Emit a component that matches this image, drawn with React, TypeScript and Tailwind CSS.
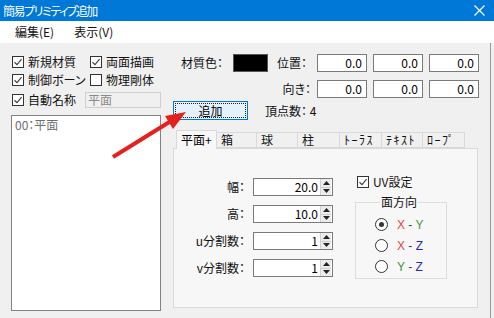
import React from 'react';

const jp = "font-['Noto_Sans_CJK_JP','Liberation_Sans',sans-serif] [font-feature-settings:'palt']";

function Check({ on, label }: { on: boolean; label: string }) {
  return (
    <div className="flex items-center h-[18px]">
      <span className="w-[12px] h-[12px] border border-[#333] bg-white flex items-center justify-center">
        {on && (
          <svg width="10" height="10" viewBox="0 0 10 10">
            <path d="M1.5 5.2 L4 7.6 L8.6 2.2" fill="none" stroke="#444" strokeWidth="1.2" />
          </svg>
        )}
      </span>
      <span className="ml-[4px] text-[12px] leading-none text-[#111]">{label}</span>
    </div>
  );
}

function NumBox({ value }: { value: string }) {
  return (
    <div className="w-[50px] h-[18px] border border-[#7a7a7a] bg-white flex items-center justify-end pr-[4px] text-[12px] leading-none text-black">
      {value}
    </div>
  );
}

function Spin({ value }: { value: string }) {
  return (
    <div className="w-[80px] h-[18px] border border-[#7a7a7a] bg-white flex items-center">
      <span className="flex-1 text-right pr-[2px] text-[12px] leading-none text-black">{value}</span>
      <span className="w-[11px] h-[16px] mr-[1px] flex flex-col border-l border-[#d0d0d0] bg-[#ececec]">
        <span className="flex-1 flex items-center justify-center border-b border-[#cfcfcf]">
          <svg width="7" height="4" viewBox="0 0 7 4"><path d="M0 4 L3.5 0 L7 4 Z" fill="#222" /></svg>
        </span>
        <span className="flex-1 flex items-center justify-center">
          <svg width="7" height="4" viewBox="0 0 7 4"><path d="M0 0 L3.5 4 L7 0 Z" fill="#222" /></svg>
        </span>
      </span>
    </div>
  );
}

function Radio({ on, a, b, ca, cb }: { on: boolean; a: string; b: string; ca: string; cb: string }) {
  return (
    <div className="flex items-center h-[21px]">
      <span className="w-[13px] h-[13px] rounded-full border border-[#333] bg-white flex items-center justify-center">
        {on && <span className="w-[5px] h-[5px] rounded-full bg-[#333]" />}
      </span>
      <span className="ml-[9px] text-[12px] leading-none font-['Liberation_Sans',sans-serif]">
        <span className={ca}>{a}</span>
        <span className="text-[#444]"> - </span>
        <span className={cb}>{b}</span>
      </span>
    </div>
  );
}

export default function App() {
  const tabs = [
    { label: '平面+', w: 'w-[41px]' },
    { label: '箱', w: 'w-[40px]' },
    { label: '球', w: 'w-[41px]' },
    { label: '柱', w: 'w-[42px]' },
    { label: 'ﾄｰﾗｽ', w: 'w-[42px]' },
    { label: 'ﾃｷｽﾄ', w: 'w-[41px]' },
    { label: 'ﾛｰﾌﾟ', w: 'w-[42px]' },
  ];
  const rows = [
    { label: '幅：', value: '20.0' },
    { label: '高：', value: '10.0' },
    { label: 'u分割数：', value: '1' },
    { label: 'v分割数：', value: '1' },
  ];

  return (
    <div className={`relative w-[494px] h-[318px] bg-[#f0f0f0] flex flex-col overflow-hidden ${jp}`}>
      {/* Title bar */}
      <div className="h-[21px] bg-[#0078d7] flex items-center justify-between pl-[3px] pr-[9px]">
        <span className="text-white text-[12px] leading-none tracking-[-1.5px]">簡易プリミティブ追加</span>
        <svg width="11" height="11" viewBox="0 0 11 11">
          <path d="M0.5 0.5 L10.5 10.5 M10.5 0.5 L0.5 10.5" stroke="#fff" strokeWidth="1.2" />
        </svg>
      </div>

      {/* Menu */}
      <div className="h-[22px] bg-white flex items-center gap-[20px] pl-[15px] text-[12px] leading-none text-[#111]">
        <span>編集(E)</span>
        <span>表示(V)</span>
      </div>

      {/* Body */}
      <div className="flex-1 flex border-r border-[#9a9a9a] mr-[3px]">
        {/* Left column */}
        <div className="w-[173px] pl-[12px] pt-[10px] flex flex-col">
          <div className="flex">
            <div className="w-[78px]"><Check on label="新規材質" /></div>
            <Check on label="両面描画" />
          </div>
          <div className="flex">
            <div className="w-[78px]"><Check on label="制御ボーン" /></div>
            <Check on={false} label="物理剛体" />
          </div>
          <div className="flex items-center mt-[2px]">
            <div className="w-[73px]"><Check on label="自動名称" /></div>
            <div className="w-[76px] h-[16px] border border-[#cfcfcf] bg-[#f0f0f0] flex items-center pl-[2px] text-[12px] leading-none text-[#8a8a8a]">
              平面
            </div>
          </div>
          <div className="mt-[6px] ml-[-1px] w-[150px] h-[196px] border border-[#828282] bg-white pl-[3px] pt-[2px] text-[12px] leading-[14px] text-[#6d6d6d]">
            00：平面
          </div>
        </div>

        {/* Right column */}
        <div className="flex-1 flex flex-col pt-[11px]">
          <div className="flex items-center h-[18px] pl-[8px]">
            <span className="w-[52px] text-[12px] leading-none text-[#111]">材質色：</span>
            <span className="w-[35px] h-[18px] bg-black border border-[#555]" />
            <span className="ml-[9px] w-[40px] text-[12px] leading-none text-[#111]">位置：</span>
            <div className="flex gap-[6px]">
              <NumBox value="0.0" />
              <NumBox value="0.0" />
              <NumBox value="0.0" />
            </div>
          </div>
          <div className="flex items-center h-[18px] mt-[8px]">
            <span className="w-[144px] text-right pr-[6px] text-[12px] leading-none text-[#111]">向き：</span>
            <div className="flex gap-[6px]">
              <NumBox value="0.0" />
              <NumBox value="0.0" />
              <NumBox value="0.0" />
            </div>
          </div>
          <div className="flex items-center mt-[3px]">
            <div className="w-[75px] h-[19px] bg-[#e5f1fb] border border-[#0078d7] p-[1px]">
              <div className="w-full h-full border border-dotted border-[#222] flex items-center justify-center text-[12px] leading-none text-black">
                追加
              </div>
            </div>
            <span className="ml-[17px] text-[12px] leading-none text-[#111]">頂点数：&nbsp;4</span>
          </div>

          {/* Tabs */}
          <div className="mt-[10px] flex items-end h-[18px] pl-[3px] w-[305px]">
            {tabs.map((t, i) => (
              <div
                key={t.label}
                className={
                  i === 0
                    ? `${t.w} h-[19px] mb-[-1px] bg-[#f7f7f7] border border-b-0 border-[#d9d9d9] pl-[4px] flex items-center text-[12px] leading-none text-black relative z-10`
                    : `${t.w} h-[16px] bg-[#f0f0f0] border border-l-0 border-[#d9d9d9] pl-[4px] flex items-center text-[12px] leading-none text-[#111] [font-feature-settings:normal] tracking-[1.5px]`
                }
              >
                {t.label}
              </div>
            ))}
          </div>
          <div className="w-[305px] h-[160px] border border-[#d9d9d9] bg-[#f7f7f7] flex">
            <div className="flex flex-col gap-[9px] pt-[29px]">
              {rows.map((r) => (
                <div key={r.label} className="flex items-center h-[18px]">
                  <span className="w-[79px] text-right pr-[8px] text-[12px] leading-none text-[#111]">{r.label}</span>
                  <Spin value={r.value} />
                </div>
              ))}
            </div>
            <div className="ml-[22px] flex flex-col pt-[24px]">
              <div className="pl-[2px]"><Check on label="UV設定" /></div>
              <fieldset className="mt-[4px] w-[92px] h-[84px] border border-[#dcdcdc] pl-[19px] pt-[5px]">
                <legend className="ml-[5px] px-[1px] text-[12px] leading-[14px] text-[#111]">面方向</legend>
                <Radio on a="X" b="Y" ca="text-[#dc4646]" cb="text-[#3c963c]" />
                <Radio on={false} a="X" b="Z" ca="text-[#dc4646]" cb="text-[#2828b4]" />
                <Radio on={false} a="Y" b="Z" ca="text-[#3c963c]" cb="text-[#2828b4]" />
              </fieldset>
            </div>
          </div>
        </div>
      </div>

      {/* Red annotation arrow */}
      <svg className="absolute left-0 top-0 pointer-events-none" width="494" height="318">
        <line x1="113" y1="157" x2="171" y2="121" stroke="#e3211f" strokeWidth="4" />
        <polygon points="186,112 173,129 165,116" fill="#e3211f" />
      </svg>
    </div>
  );
}
